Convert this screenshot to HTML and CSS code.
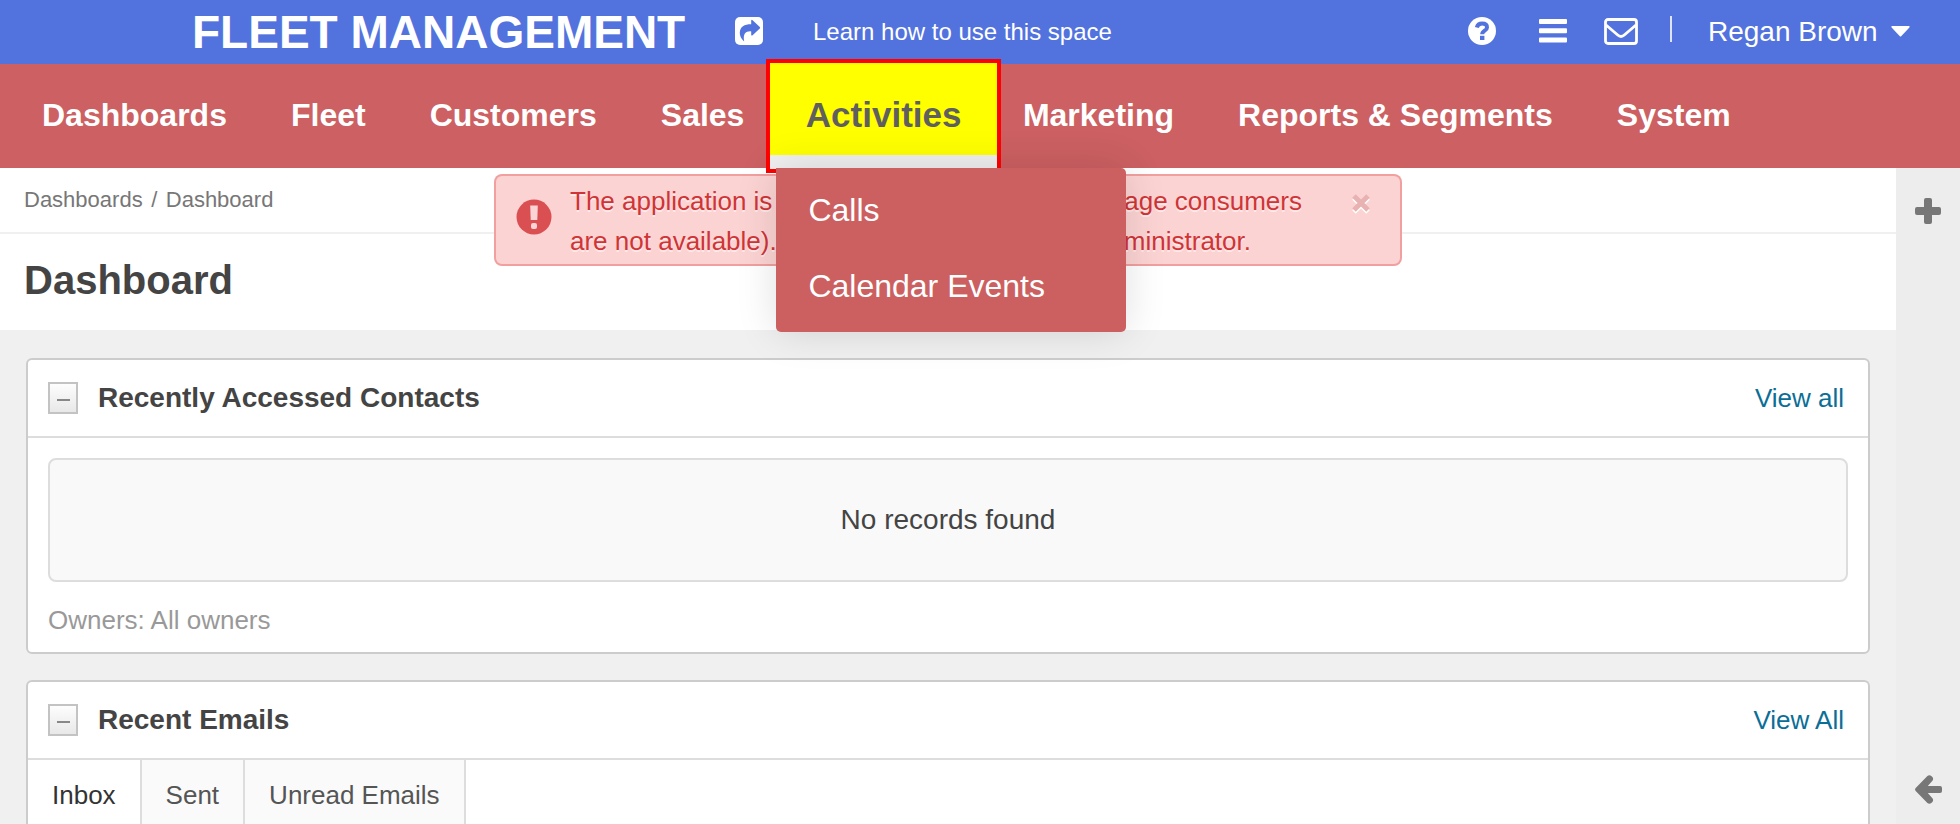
FILE: index.html
```html
<!DOCTYPE html>
<html lang="en">
<head>
<meta charset="utf-8">
<title>Dashboard</title>
<link rel="stylesheet" href="styles.css">
</head>
<body>
<header class="topbar">
  <div class="org">FLEET MANAGEMENT</div>
  <svg class="share" width="28" height="28" viewBox="0 0 28 28"><rect width="28" height="28" rx="5" fill="#fff"/><path d="M16.2 3.4 Q16.6 2.4 17.6 3.2 L24.8 10 Q25.6 10.8 24.8 11.6 L17.6 18.2 Q16.6 19 16.2 18 V14.4 C11 14 7.6 16.4 9.2 24.6 C5.8 21.4 4.6 18 4.8 15.4 C5.2 9.6 9.2 7.2 16.2 7.2 Z" fill="#5272de"/></svg>
  <a class="learn">Learn how to use this space</a>
  <div class="tools">
    <svg class="help" width="28" height="28" viewBox="0 0 28 28"><circle cx="14" cy="14" r="14" fill="#fff"/><path d="M8.8 10.6 C9.6 7.6 11.6 6.6 14.1 6.6 C17 6.6 19 8 19 10.4 C19 13.9 14.2 13.4 14.2 17.2" fill="none" stroke="#5272de" stroke-width="4"/><rect x="12" y="18.8" width="4.4" height="4.2" fill="#5272de"/></svg>
    <svg class="list" width="28" height="24" viewBox="0 0 28 24" fill="#fff"><rect width="28" height="5" rx="1"/><rect y="9.2" width="28" height="5" rx="1"/><rect y="18.4" width="28" height="5" rx="1"/></svg>
    <svg class="mail" width="34" height="27" viewBox="0 0 34 27" fill="none" stroke="#fff" stroke-width="2.8"><rect x="1.5" y="1.5" width="31" height="24" rx="2.5"/><path d="M2 7 L13.4 16.8 Q17 20.2 20.6 16.8 L32 7"/></svg>
    <span class="divider"></span>
    <span class="user">Regan Brown</span>
    <svg class="caret" width="19" height="11" viewBox="0 0 19 11"><path d="M.8 0 H18.2 Q19 .4 18.4 1.4 L10.4 10 Q9.5 11 8.6 10 L.6 1.4 Q0 .4 .8 0Z" fill="#fff"/></svg>
  </div>
</header>
<nav class="nav">
  <a>Dashboards</a>
  <a>Fleet</a>
  <a>Customers</a>
  <a>Sales</a>
  <div class="active"><span>Activities</span>
    <div class="menu"><a>Calls</a><a>Calendar Events</a></div>
  </div>
  <a>Marketing</a>
  <a>Reports &amp; Segments</a>
  <a>System</a>
</nav>
<div class="page">
  <main class="main">
    <div class="crumbs"><span>Dashboards</span><span>/</span><span>Dashboard</span></div>
    <div class="heading"><h1>Dashboard</h1></div>
    <div class="widgets">
      <section class="card">
        <div class="card-head"><span class="toggle"></span><h2>Recently Accessed Contacts</h2><a>View all</a></div>
        <div class="card-body">
          <div class="empty">No records found</div>
          <div class="owners">Owners: All owners</div>
        </div>
      </section>
      <section class="card open">
        <div class="card-head"><span class="toggle"></span><h2>Recent Emails</h2><a>View All</a></div>
        <div class="tabs"><span class="tab current">Inbox</span><span class="tab">Sent</span><span class="tab">Unread Emails</span></div>
      </section>
    </div>
  </main>
  <aside class="side">
    <svg width="26" height="26" viewBox="0 0 26 26"><path d="M11 0h4a2 2 0 0 1 2 2v7h7a2 2 0 0 1 2 2v4a2 2 0 0 1-2 2h-7v7a2 2 0 0 1-2 2h-4a2 2 0 0 1-2-2v-7H2a2 2 0 0 1-2-2v-4a2 2 0 0 1 2-2h7V2a2 2 0 0 1 2-2z" fill="#777"/></svg>
    <svg width="27" height="29" viewBox="0 0 27 29" fill="#777"><path d="M.7 13 L12.4 1 Q14.4 -.6 16.6 1.2 L17.4 2 Q19 4 17.2 6 L12.8 11 H25 Q27 11 27 13 V16 Q27 18 25 18 H12.8 L17.2 23 Q19 25 17.4 27 L16.6 27.8 Q14.4 29.6 12.4 28 L.7 16 Q-.6 14.5 .7 13Z"/></svg>
  </aside>
</div>
<div class="alert">
  <svg class="warn" width="36" height="36" viewBox="0 0 36 36"><circle cx="18" cy="18" r="17.5" fill="#da4f51"/><path d="M14.2 6.5h7.6l-.5 14.5h-6.6z" fill="#fbd5d5"/><rect x="15" y="24" width="6" height="6" rx="2" fill="#fbd5d5"/></svg>
  <div class="alert-text">
    <div class="line"><span>The application is</span><span>message consumers</span></div>
    <div class="line second"><span>are not available).</span><span>administrator.</span></div>
  </div>
  <svg class="close" width="18" height="20" viewBox="0 0 18 20" fill="none" stroke-width="5"><path d="M2 4 L16 18 M16 4 L2 18" stroke="#fff"/><path d="M2 2 L16 16 M16 2 L2 16" stroke="#e8b2b2"/></svg>
</div>
</body>
</html>
```
FILE: styles.css
```css
*, *::before { box-sizing: border-box; }
html { height: 824px; overflow: hidden; }
body {
  margin: 0;
  height: 824px;
  overflow: hidden;
  display: flex;
  flex-direction: column;
  position: relative;
  font-family: "Liberation Sans", Arial, sans-serif;
  color: #444;
  background: #f0f0f0;
}
svg { display: block; flex: none; }
h1, h2 { margin: 0; }

.topbar {
  flex: none;
  height: 64px;
  display: flex;
  align-items: center;
  padding: 0 50px 0 192px;
  background: #5272de;
  color: #fff;
  white-space: nowrap;
}
.org { width: 543px; font-size: 46px; font-weight: bold; line-height: 64px; }
.share { margin-bottom: 3px; }
.learn { margin-left: 50px; font-size: 24px; }
.tools { margin-left: auto; display: flex; align-items: center; }
.help { margin: 0 43px 3px 0; }
.list { margin: 0 37px 3px 0; }
.mail { margin: 0 32px 1px 0; }
.divider { width: 2px; height: 26px; margin: 0 36px 6px 0; background: #dde3f8; }
.user { font-size: 28px; width: 183px; }
.caret { margin-bottom: 2px; }

.nav {
  flex: none;
  height: 104px;
  display: flex;
  align-items: center;
  gap: 64px;
  padding: 0 0 2px 42px;
  position: relative;
  z-index: 5;
  background: #cc6062;
  color: #fff;
  font-size: 32px;
  font-weight: bold;
  line-height: 40px;
  white-space: nowrap;
}
.active {
  position: relative;
  width: 150.5px;
  display: flex;
  justify-content: center;
  color: #5f5f5f;
  font-size: 35px;
}
.active > span { position: relative; z-index: 1; }
.active::before {
  content: "";
  position: absolute;
  left: -42.5px;
  top: -36px;
  width: 235px;
  height: 114px;
  border: 4px solid #f00;
  background: linear-gradient(#ff0 92px, #f0f0f0 92px);
}
.menu {
  position: absolute;
  z-index: 2;
  left: -32.5px;
  top: 73px;
  width: 350px;
  height: 164px;
  padding: 4px 32px 8px 32.5px;
  border-radius: 0 5px 5px 5px;
  background: #cc6060;
  box-shadow: 0 0 40px rgba(0, 0, 0, .13);
  color: #fff;
  font-size: 32px;
  font-weight: normal;
}
.menu a { display: block; line-height: 76px; }

.page { flex: 1; display: flex; min-height: 0; overflow: hidden; }
.main { flex: 1; min-width: 0; display: flex; flex-direction: column; overflow: hidden; }
.crumbs {
  flex: none;
  height: 66px;
  display: flex;
  align-items: center;
  gap: 8.5px;
  padding: 0 0 0 24px;
  border-bottom: 2px solid #f0f0f0;
  background: #fff;
  color: #777;
  font-size: 22px;
}
.heading { flex: none; height: 96px; padding: 22px 0 0 24px; background: #fff; }
h1 { font-size: 40px; line-height: 48px; }
.widgets {
  flex: 1;
  min-height: 0;
  display: flex;
  flex-direction: column;
  gap: 26px;
  padding: 28px 26px 0;
}
.card {
  flex: none;
  border: 2px solid #ccc;
  border-radius: 6px;
  background: #fff;
  overflow: hidden;
}
.open {
  flex: 1;
  min-height: 0;
  display: flex;
  flex-direction: column;
  border-bottom: 0;
  border-radius: 6px 6px 0 0;
}
.card-head {
  flex: none;
  height: 78px;
  display: flex;
  align-items: center;
  padding: 0 24px 0 20px;
  border-bottom: 2px solid #ddd;
}
.toggle {
  width: 30px;
  height: 32px;
  margin-right: 20px;
  border: 2px solid #c3c3c3;
  background: linear-gradient(#fdfdfd, #e8e8e8);
  display: grid;
  place-items: center;
}
.toggle::before { content: ""; width: 13px; height: 2px; margin-top: 3px; background: #888; }
h2 { font-size: 28px; line-height: 40px; }
.card-head a { margin-left: auto; font-size: 26px; color: #0b6e96; }
.card-body { height: 214px; padding: 20px; }
.empty {
  height: 124px;
  border: 2px solid #ddd;
  border-radius: 8px;
  background: #f9f9f9;
  display: grid;
  place-items: center;
  font-size: 28px;
}
.owners { margin-top: 18px; font-size: 26px; line-height: 40px; color: #999; }
.tabs { flex: 1; min-height: 0; display: flex; font-size: 26px; line-height: 70px; color: #555; }
.tab { padding: 0 24px; border-right: 2px solid #ddd; background: #fafafa; overflow: hidden; }
.current { background: #fff; color: #333; }
.side {
  width: 64px;
  display: flex;
  flex-direction: column;
  justify-content: space-between;
  padding: 30px 0 20px 19px;
  background: #ededed;
}

.alert {
  position: absolute;
  left: 494px;
  top: 174px;
  width: 908px;
  height: 92px;
  display: flex;
  padding: 5px 30px 0 20px;
  border: 2px solid rgba(240, 150, 150, .85);
  border-radius: 8px;
  background: rgba(252, 209, 209, .96);
  color: #cf3436;
  font-size: 26px;
  line-height: 40px;
  text-shadow: 0 2px 0 rgba(255, 255, 255, .5);
  white-space: nowrap;
}
.warn { margin: 18px 18px 0 0; }
.alert-text { width: 732px; margin-right: 50px; }
.line { display: flex; justify-content: space-between; }
.second { padding-right: 51px; }
.close { margin-top: 13px; }
```
